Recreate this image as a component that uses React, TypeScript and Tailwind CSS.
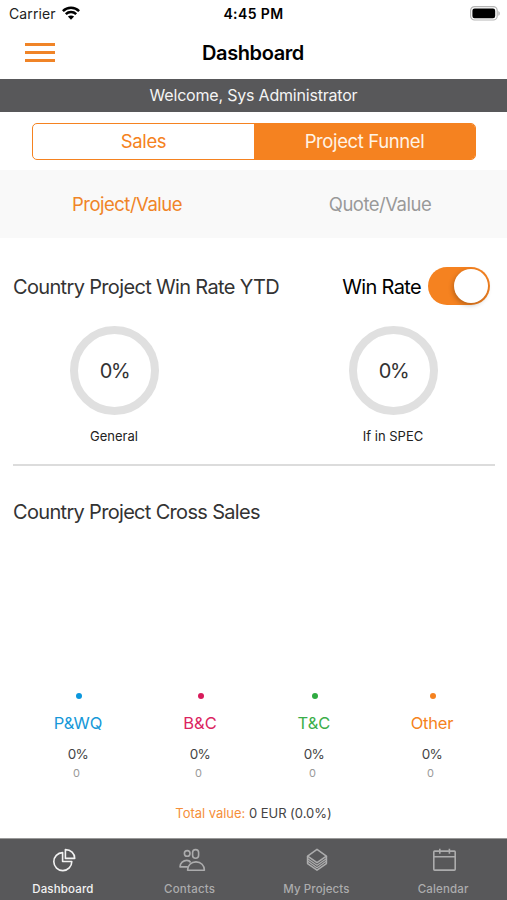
import React from 'react';

const tabs = [
  {
    label: 'Dashboard',
    active: true,
    labelClass: 'tracking-[0.15px]',
    icon: (
      <>
        <path d="M9.6 4.6A9 9 0 1 0 18.8 13.5H9.6Z" />
        <path d="M12.4 1.6V10.4H21.7C21.7 5.2 17.8 1.6 12.4 1.6Z" />
      </>
    ),
  },
  {
    label: 'Contacts',
    active: false,
    labelClass: 'tracking-[0.2px]',
    icon: (
      <>
        <circle cx="7.2" cy="5.4" r="2.8" />
        <rect x="12.6" y="1.6" width="6" height="8.6" rx="3" />
        <path d="M7.6 22.2C7.6 17.5 11 13.9 16 13.9S24.4 17.5 24.4 22.2Z" />
        <path d="M7.8 18.9H0C0.2 15 3.2 12.4 6.8 12.4C8.2 12.4 9.7 12.8 10.7 14.5" />
      </>
    ),
  },
  {
    label: 'My Projects',
    active: false,
    labelClass: 'tracking-[0.1px]',
    icon: (
      <>
        <path d="M11 1.4L20.4 8.1L11 14.6L1.6 8.1Z" />
        <path d="M1.6 8.1V15.6L11 22.2L20.4 15.6V8.1" />
        <path d="M1.6 10.7L11 17.2L20.4 10.7" strokeWidth="1.2" />
        <path d="M1.6 13.1L11 19.7L20.4 13.1" strokeWidth="1.2" />
      </>
    ),
  },
  {
    label: 'Calendar',
    active: false,
    labelClass: 'tracking-[0.15px]',
    icon: (
      <>
        <rect x="0.8" y="3.1" width="21.4" height="19" rx="0.8" />
        <path d="M0.8 8.8H22.2M6.8 0.8V5.8M16.4 0.8V5.8" />
      </>
    ),
  },
];

const categories = [
  { name: 'P&WQ', width: 'w-[122px]', text: 'text-[#1698d8] tracking-[-0.1px]', dot: 'bg-[#0b97dd]' },
  { name: 'B&C', width: 'w-[122px]', text: 'text-[#db2360]', dot: 'bg-[#d81b5b]' },
  { name: 'T&C', width: 'w-[106px]', text: 'text-[#3aae49]', dot: 'bg-[#2fab41]' },
  { name: 'Other', width: 'w-[130px]', text: 'text-[#f58220] tracking-[-0.2px]', dot: 'bg-[#f58220]' },
];

const StatusBar: React.FC = () => (
  <div className="grid h-7 grid-cols-3 items-center pl-[9px] pr-[7px]">
    <div className="flex items-center gap-[6px]">
      <span className="text-[14px] leading-7 tracking-[0.1px] text-[#222]">Carrier</span>
      <svg className="-mt-[3px] h-[14px] w-[18px]" viewBox="0 0 18 14" fill="none" stroke="#000" strokeWidth="2.5">
        <path d="M0.9 5.1C5.4 0.7 12.6 0.7 17.1 5.1" />
        <path d="M3.8 8.2C6.7 5.4 11.3 5.4 14.2 8.2" />
        <path d="M9 13.8L5.9 10.6C7.7 9 10.3 9 12.1 10.6Z" fill="#000" stroke="none" />
      </svg>
    </div>
    <span className="-ml-[2px] text-center text-[14px] font-semibold leading-7 tracking-[0.4px]">4:45 PM</span>
    <svg className="-mt-[2px] h-[15px] w-[30px] justify-self-end" viewBox="0 0 30 15" fill="none">
      <rect x="0.6" y="0.6" width="26.6" height="13.4" rx="4" stroke="#b5b5b5" strokeWidth="1.2" />
      <rect x="2.4" y="2.5" width="22.8" height="9.8" rx="2.2" fill="#000" />
      <path d="M28.3 5V9.8C29.3 9.4 29.8 8.5 29.8 7.4S29.3 5.4 28.3 5Z" fill="#b5b5b5" />
    </svg>
  </div>
);

const Ring: React.FC<{ label: string }> = ({ label }) => (
  <div className="flex w-[89px] flex-col items-center">
    <div className="flex h-[89px] w-[89px] items-center justify-center rounded-full border-[8.5px] border-[#e0e0e0]">
      <span className="text-[20px] tracking-[-1.3px] text-[#333]">0%</span>
    </div>
    <span className="-ml-px mt-[11px] whitespace-nowrap text-[13px] leading-5 text-[#222]">{label}</span>
  </div>
);

const App: React.FC = () => {
  const [winRate, setWinRate] = React.useState(true);

  return (
    <div className="flex h-[900px] w-[507px] flex-col overflow-hidden bg-white font-['Inter','Liberation_Sans',sans-serif] text-black">
      <StatusBar />

      {/* Header */}
      <header className="grid h-[51px] grid-cols-3 items-center px-[25px] pb-[2px]">
        <button className="flex w-[30px] flex-col gap-[5px]" aria-label="Menu">
          <span className="h-[3px] w-full bg-[#f08427]" />
          <span className="h-[3px] w-full bg-[#f08427]" />
          <span className="h-[3px] w-full bg-[#f08427]" />
        </button>
        <h1 className="-ml-px text-center text-[20px] font-semibold leading-6 tracking-[-0.4px]">Dashboard</h1>
      </header>

      <div className="h-[33px] bg-[#58585a] text-center text-[16px] leading-[33px] tracking-[-0.2px] text-[#f4f4f4]">
        Welcome, Sys Administrator
      </div>

      {/* Segmented control */}
      <div className="h-[58px] px-8 pt-[11px] pr-[31px]">
        <div className="flex h-[37px] overflow-hidden rounded-[5px] border border-[#f58220] text-[18.5px] leading-[35px] tracking-[-0.38px]">
          <button className="w-[221px] text-[#f58220]">Sales</button>
          <button className="flex-1 bg-[#f58220] text-[#fff3e6]">Project Funnel</button>
        </div>
      </div>

      <div className="flex h-[68px] items-center bg-[#f9f9f9] pt-[2px] text-[18.5px] tracking-[-0.5px]">
        <button className="h-full w-[254px] text-[#f08427]">Project/Value</button>
        <button className="h-full flex-1 pr-px text-[#999]">Quote/Value</button>
      </div>

      {/* Win rate */}
      <section className="ml-[13px] mr-3 h-[228px] border-b-2 border-[#dcdcdc] pt-[28px]">
        <div className="flex h-[40px] items-center pr-[5px] tracking-[-0.66px]">
          <h2 className="pt-[2px] text-[20px] text-[#333]">Country Project Win Rate YTD</h2>
          <span className="ml-auto pt-[2px] text-[20px]">Win Rate</span>
          <button
            className={`-mt-px ml-[7px] flex h-[38px] w-[62px] items-center rounded-full p-[2px] ${winRate ? 'justify-end bg-[#f58220]' : 'justify-start bg-[#ddd]'}`}
            onClick={() => setWinRate(!winRate)}
            aria-label="Win Rate"
          >
            <span className="h-[34px] w-[34px] rounded-full bg-white shadow-[-1px_2px_5px_rgba(0,0,0,0.25)]" />
          </button>
        </div>
        <div className="mt-[20px] flex justify-between pl-[57px] pr-[57px]">
          <Ring label="General" />
          <Ring label="If in SPEC" />
        </div>
      </section>

      {/* Cross sales */}
      <section className="flex flex-1 flex-col">
        <h2 className="ml-[13px] mt-[31px] text-[20px] leading-[30px] tracking-[-0.68px] text-[#333]">
          Country Project Cross Sales
        </h2>
        <div className="mt-auto flex pl-[17px]">
          {categories.map((item) => (
            <div key={item.name} className={`flex flex-col items-center ${item.width}`}>
              <span className={`ml-px h-[6px] w-[6px] rounded-full ${item.dot}`} />
              <span className={`mt-[12px] text-[16.5px] leading-6 ${item.text}`}>{item.name}</span>
              <span className="mt-[9px] text-[13.5px] leading-5 tracking-[-0.6px] text-[#444]">0%</span>
              <span className="-ml-[3px] mt-[1px] text-[11px] leading-4 text-[#999]">0</span>
            </div>
          ))}
        </div>
        <p className="mb-[15px] mt-[22px] text-center text-[13px] leading-5 tracking-[-0.03px] text-[#444]">
          <span className="text-[#f58f3a]">Total value:</span> 0 EUR (0.0%)
        </p>
      </section>

      {/* Tab bar */}
      <nav className="flex h-[62px] border-t border-[#999] bg-[#58585a]">
        {tabs.map((tab) => (
          <button
            key={tab.label}
            className={`flex flex-1 flex-col items-center pt-[9px] ${tab.active ? 'text-[#f2f2f2]' : 'text-[#acacad]'}`}
          >
            <svg
              className="ml-[3px] h-6 w-6 overflow-visible"
              viewBox="0 0 24 24"
              fill="none"
              stroke="currentColor"
              strokeWidth="1.6"
              strokeLinejoin="round"
            >
              {tab.icon}
            </svg>
            <span className={`-ml-px mt-[9px] text-[11.5px] font-medium leading-4 ${tab.labelClass}`}>{tab.label}</span>
          </button>
        ))}
      </nav>
    </div>
  );
};

export default App;
